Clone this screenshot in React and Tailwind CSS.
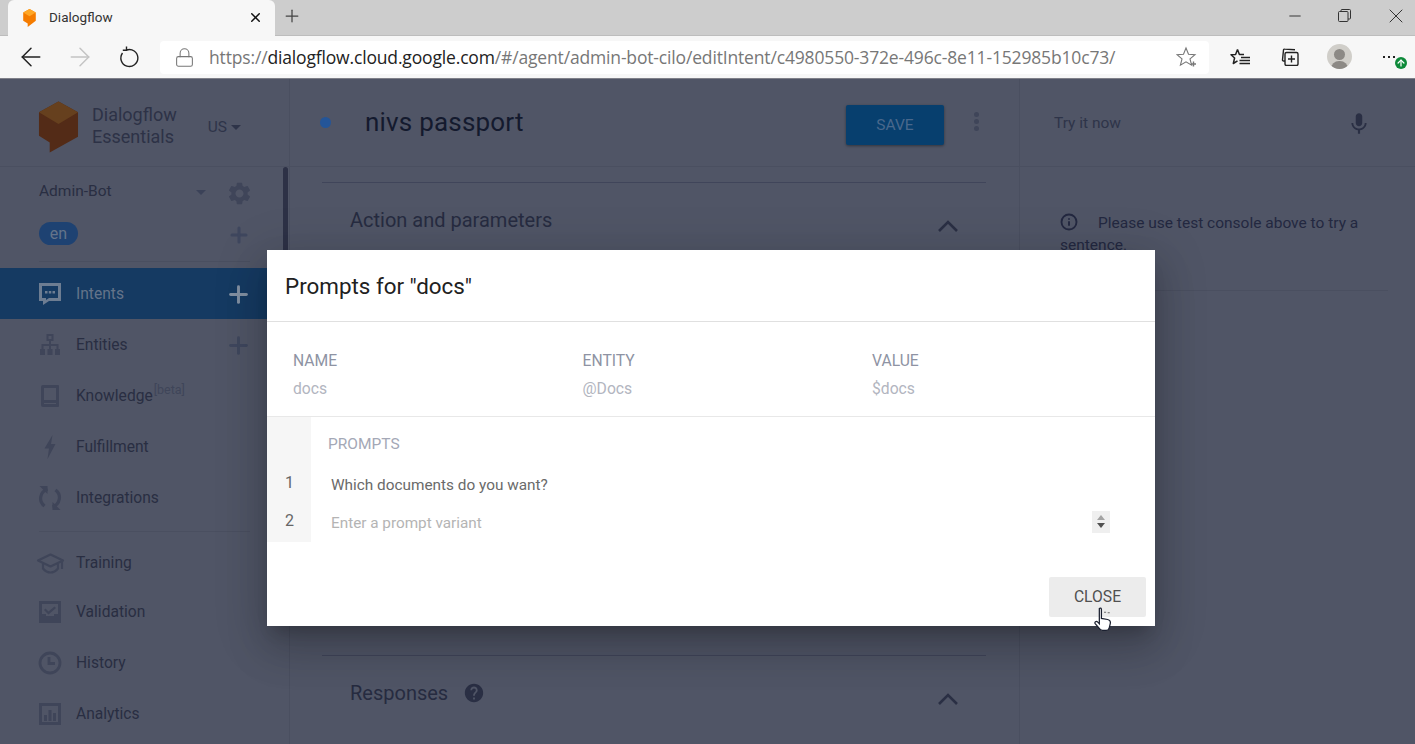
import React from "react";
import { ArrowLeft, ArrowRight, ArrowUp, Lock, X, Plus, Minus, Info } from "lucide-react";
import { MdSettings, MdMic, MdHelp } from "react-icons/md";

const FONT = { fontFamily: "Roboto, sans-serif" };

const NAV_TOP = [
  { label: "Intents", icon: "intents", plus: true, active: true },
  { label: "Entities", icon: "entities", plus: true },
  { label: "Knowledge", icon: "knowledge", beta: true },
  { label: "Fulfillment", icon: "bolt" },
  { label: "Integrations", icon: "sync" },
];

const NAV_BOTTOM = [
  { label: "Training", icon: "training", short: true },
  { label: "Validation", icon: "validation" },
  { label: "History", icon: "history" },
  { label: "Analytics", icon: "analytics" },
];

const NavIcon = ({ name, className }) => {
  if (name === "intents")
    return (
      <svg viewBox="0 0 24 24" className={className} fill="currentColor">
        <path fillRule="evenodd" d="M1 1h22v18H11l-6 4v-4H1V1zm3 3v12h4v2l3-2h9V4H4zm3 5h2.500v2.500H7V9zm3.800 0h2.500v2.500h-2.500V9zm3.700 0H17v2.500h-2.500V9z" />
      </svg>
    );
  if (name === "entities")
    return (
      <svg viewBox="0 0 24 24" className={className} fill="currentColor">
        <path fillRule="evenodd" d="M8.500 1h7v7H13v3h7.500v5H22v6h-5v-6h1.500v-3H13v3h1.500v6h-5v-6H11v-3H5.500v3H7v6H2v-6h1.500v-5H11V8H8.500V1zm2 2v3h3V3h-3z" />
      </svg>
    );
  if (name === "knowledge")
    return (
      <svg viewBox="0 0 24 24" className={className} fill="currentColor">
        <path fillRule="evenodd" d="M5 1h15a1 1 0 0 1 1 1v20a1 1 0 0 1-1 1H5a2 2 0 0 1-2-2V3a2 2 0 0 1 2-2zm1 3v12h12V4H6zm0 15v1h12v-1H6z" />
      </svg>
    );
  if (name === "bolt")
    return (
      <svg viewBox="0 0 24 24" className={className} fill="currentColor">
        <path d="M14.500 0 6.500 13.500h4.500L9.500 24 17.500 9H13L14.500 0z" />
      </svg>
    );
  if (name === "sync")
    return (
      <svg viewBox="0 0 24 24" className={className} fill="none" stroke="currentColor" strokeWidth="3.200">
        <path d="M9.500 3.200A9.500 9.500 0 0 0 6.500 20" />
        <path d="M14.500 20.800A9.500 9.500 0 0 0 17.500 4" />
        <path d="M1.500 0h8v8z" fill="currentColor" stroke="none" />
        <path d="M22.500 24h-8v-8z" fill="currentColor" stroke="none" />
      </svg>
    );
  if (name === "training")
    return (
      <svg viewBox="0 0 29 21" className={className} fill="none" stroke="currentColor" strokeWidth="2.200">
        <path d="M14.500 1.500 27 7.500l-12.500 6L2 7.500z" strokeLinejoin="round" />
        <path d="M7 10.500v5c2 2.500 4.500 4 7.500 4s5.500-1.500 7.500-4v-5" />
        <path d="M26 8v8" />
      </svg>
    );
  if (name === "validation")
    return (
      <svg viewBox="0 0 24 24" className={className} fill="currentColor">
        <path fillRule="evenodd" d="M1 1h22v22H1V1zm3 3v10h4v2h8v-2h4V4H4zm3.500 4.500 3 3 6-5 1.500 1.500-7.500 6.500-4.500-4.500 1.500-1.500z" />
      </svg>
    );
  if (name === "history")
    return (
      <svg viewBox="0 0 24 24" className={className} fill="none" stroke="currentColor" strokeWidth="2.800">
        <circle cx="12" cy="12" r="10" />
        <path d="M11 6v6.500h6" />
      </svg>
    );
  return (
    <svg viewBox="0 0 24 24" className={className} fill="currentColor">
      <path fillRule="evenodd" d="M1 1h22v22H1V1zm3 3v16h16V4H4zm2 9h3v6H6v-6zm4.500-5h3v11h-3V8zM15 11h3v8h-3v-8z" />
    </svg>
  );
};

const NavItem = ({ item }) => (
  <div className={`flex items-center pl-[38px] pr-[37px] ${item.short ? "h-[48px] pt-[2px]" : "h-[51px]"} ${item.active ? "bg-[#153a62] text-[#64748a]" : "text-[#292e42]"}`}>
    {item.icon === "training" ? (
      <NavIcon name="training" className="w-[29px] h-[21px] -ml-[2px] -mr-[3px] text-[#3f4559]" />
    ) : (
      <NavIcon name={item.icon} className={`w-[24px] h-[24px] ${item.active ? "text-[#6d7d92]" : "text-[#3f4559]"}`} />
    )}
    <span className="ml-[14px] mt-[2px] text-[15.600px] leading-none">{item.label}</span>
    {item.beta && <span className="ml-[1px] -mt-[10px] text-[12.500px] text-[#3f4559] leading-none">[beta]</span>}
    {item.plus && (
      <Plus className={`ml-auto mt-[2px] w-[27px] h-[27px] ${item.active ? "text-[#8290a2]" : "text-[#3f475e]"}`} strokeWidth={2.600} />
    )}
  </div>
);

const Sidebar = () => (
  <aside className="w-[290px] shrink-0 border-r border-[#4a4f60] relative">
    <div className="h-[88px] flex items-center pl-[38px] border-b border-[#4a4f60]">
      <svg viewBox="0 0 42 52" className="w-[41px] h-[52px] shrink-0 mt-[8px]">
        <path d="M21 0 41 11v25L12 52V42L1 35V11z" fill="#532b17" />
        <path d="M21 0 41 11 21 23 1 11z" fill="#66401e" />
      </svg>
      <div className="ml-[13px] mt-[6px] text-[18px] leading-[22px] text-[#2d3246]">
        <div>Dialogflow</div>
        <div>Essentials</div>
      </div>
      <span className="ml-[31px] mt-[10px] text-[15.500px] text-[#2e3449]">US</span>
      <span className="ml-[4px] mt-[10px] w-0 h-0 border-l-[5px] border-r-[5px] border-t-[5px] border-l-transparent border-r-transparent border-t-[#2e3449]" />
    </div>
    <div className="pl-[39px] pr-[38px] pt-[10px]">
      <div className="flex items-center h-[30px]">
        <span className="text-[15.500px] text-[#292e42]">Admin-Bot</span>
        <span className="ml-auto mr-[20px] w-0 h-0 border-l-[5px] border-r-[5px] border-t-[5px] border-l-transparent border-r-transparent border-t-[#3b4258]" />
        <MdSettings className="w-[27px] h-[27px] -mr-[2px] mt-[3px] text-[#3f4559]" />
      </div>
      <div className="flex items-center justify-between h-[23px] mt-[15px]">
        <span className="w-[39px] h-[23px] rounded-full bg-[#1e4272] text-[#64748a] text-[16px] flex items-center justify-center">en</span>
        <Plus className="w-[24px] h-[24px] mt-[3px] text-[#3f475e]" strokeWidth={3} />
      </div>
    </div>
    <div className="mx-[39px] mt-[16px] mb-[6px] border-t border-[#4a4f60]" />
    <nav>
      {NAV_TOP.map((item) => <NavItem key={item.label} item={item} />)}
    </nav>
    <div className="mx-[39px] mt-[8px] mb-[6px] border-t border-[#4a4f60]" />
    <nav>
      {NAV_BOTTOM.map((item) => <NavItem key={item.label} item={item} />)}
    </nav>
    <div className="absolute top-[88px] right-[1px] w-[5px] h-[90px] rounded-full bg-[#2d3146]" />
  </aside>
);

const Dialog = () => (
  <div className="absolute left-[267px] top-[171px] w-[888px] h-[376px] bg-white shadow-[0_11px_15px_-7px_rgba(0,0,0,0.2),0_24px_38px_3px_rgba(0,0,0,0.14),0_9px_46px_8px_rgba(0,0,0,0.12)] flex flex-col">
    <div className="h-[72px] pl-[18px] pt-[2px] flex items-center border-b border-[#e0e0e0] text-[22.400px] text-[#212121]">Prompts for "docs"</div>
    <div className="h-[95px] flex pl-[26px] pt-[28px] border-b border-[#e8e8e8]">
      {[["NAME", "docs"], ["ENTITY", "@Docs"], ["VALUE", "$docs"]].map(([label, value]) => (
        <div key={label} className="w-[289.500px] shrink-0">
          <div className="text-[15.700px] leading-[22px] text-[#8e93a3]">{label}</div>
          <div className="text-[15.700px] leading-[22px] mt-[6px] text-[#b2b5c0]">{value}</div>
        </div>
      ))}
    </div>
    <div className="flex h-[125px]">
      <div className="w-[44px] bg-[#f6f6f6] text-[16px] text-[#666] pl-[18px] pt-[55px]">
        <div className="leading-[22px]">1</div>
        <div className="leading-[22px] mt-[16px]">2</div>
      </div>
      <div className="flex-1 pl-[17px] pr-[45px] pt-[16px]">
        <div className="text-[15.500px] leading-[22px] text-[#a4a8b6]">PROMPTS</div>
        <div className="pl-[3px] mt-[19px] text-[15.350px] leading-[22px] text-[#6a6a6a]">Which documents do you want?</div>
        <div className="pl-[3px] mt-[16px] flex items-center justify-between text-[15.300px] leading-[22px] text-[#b4b4b4]">
          <span>Enter a prompt variant</span>
          <span className="w-[18px] h-[22px] -mt-[3px] bg-[#efefef] flex flex-col items-center justify-center gap-[3px]">
            <span className="w-0 h-0 border-l-[4px] border-r-[4px] border-b-[5px] border-l-transparent border-r-transparent border-b-[#a3a3a3]" />
            <span className="w-0 h-0 border-l-[4px] border-r-[4px] border-t-[5px] border-l-transparent border-r-transparent border-t-[#505050]" />
          </span>
        </div>
      </div>
    </div>
    <div className="flex justify-end pr-[9px] pt-[35px]">
      <button className="relative w-[97px] h-[40px] rounded-[2px] bg-[#ececec] text-[15.700px] text-[#505050]">
        CLOSE
        <svg viewBox="0 0 20 24" className="absolute left-[44px] top-[30px] w-[21px] h-[25px]">
          <path d="M6 1.500c1-1 2-.5 2 1V11l6 1c2 .5 3 2 2.500 4l-1 4c-.5 1.500-1 2.500-3 2.500H9c-1.500 0-2.500-1-3.500-2.500L2 16c-1-1.500 1-3 2.500-1.500L6 16V1.500z" fill="#fff" stroke="#1b2030" strokeWidth="1.200" />
          <path d="M10.500 5h2M14 5.500h2" stroke="#6b6b6b" strokeWidth="1" />
        </svg>
      </button>
    </div>
  </div>
);

const SectionHeader = ({ children }) => (
  <div className="h-[74px] flex items-center justify-between pl-[28px] pr-[28px]">
    <span className="flex items-center gap-[15px] text-[20px] text-[#262b40]">{children}</span>
    <svg viewBox="0 0 20 12" className="w-[20px] h-[12px] mt-[12px] text-[#2a2f44]" fill="none" stroke="currentColor" strokeWidth="2.600">
      <path d="M1 11 10 2l9 9" />
    </svg>
  </div>
);

const Main = () => (
  <main className="w-[730px] shrink-0 border-r border-[#4a4f60]">
    <div className="h-[88px] flex items-center pl-[30px] pr-[40px] border-b border-[#4a4f60]">
      <span className="w-[11px] h-[11px] rounded-full bg-[#245598]" />
      <h1 className="ml-[34px] text-[26px] tracking-[0.2px] text-[#141a2e] font-normal">nivs passport</h1>
      <button className="ml-auto mr-[-1px] mt-[5px] pt-[1px] w-[98px] h-[40px] rounded-[2px] bg-[#073f6e] text-[#49688c] text-[15.500px] shadow-[0_1px_3px_rgba(0,0,0,0.4)]">SAVE</button>
      <div className="ml-[31px] -mt-[3px] flex flex-col gap-[2px]">
        <span className="w-[5px] h-[5px] rounded-full bg-[#3f4559]" />
        <span className="w-[5px] h-[5px] rounded-full bg-[#3f4559]" />
        <span className="w-[5px] h-[5px] rounded-full bg-[#3f4559]" />
      </div>
    </div>
    <div className="pl-[32px] pr-[33px]">
      <div className="mt-[15px] border-t border-[#40455a]" />
      <SectionHeader>Action and parameters</SectionHeader>
      <div className="mt-[398px] border-t border-[#40455a]" />
      <SectionHeader>
        Responses
        <MdHelp className="w-[22px] h-[22px] text-[#2a2f44]" />
      </SectionHeader>
    </div>
  </main>
);

const TestPanel = () => (
  <section className="flex-1">
    <div className="h-[88px] flex items-center pl-[34px] pr-[43px] border-b border-[#4a4f60]">
      <span className="mt-[2px] text-[15.500px] text-[#2e3449]">Try it now</span>
      <MdMic className="ml-auto mt-[2px] w-[26px] h-[26px] text-[#2a2f44]" />
    </div>
    <div className="ml-[40px] mr-[27px] pt-[45px] pb-[34px] border-b border-[#4a4f60] text-[15.500px] leading-[22px] text-[#232840]">
      <Info className="inline-block w-[18px] h-[18px] mr-[20px] align-[-3px]" strokeWidth={2.500} />
      Please use test console above to try a sentence.
    </div>
  </section>
);

const BrowserChrome = () => (
  <header className="h-[79px] shrink-0 flex flex-col">
    <div className="h-[35px] bg-[#cdcdcd] flex items-end pl-[8px]">
      <div className="relative w-[267px] h-[36px] -mb-[1px] pb-[1px] bg-[#f7f7f7] rounded-t-[6px] flex items-center pl-[14px] pr-[12px]">
        <svg viewBox="0 0 16 20" className="w-[15px] h-[18px]">
          <path d="M8 0l7 4v9l-9 7v-4l-5-3V4z" fill="#f57c00" />
          <path d="M8 0l7 4-7 4-7-4z" fill="#ffa726" />
        </svg>
        <span className="ml-[12px] text-[13.500px] text-[#333]">Dialogflow</span>
        <X className="ml-auto w-[15px] h-[15px] text-[#111]" strokeWidth={2.400} />
      </div>
      <Plus className="ml-[7px] mb-[9px] w-[20px] h-[20px] text-[#444]" strokeWidth={1.500} />
      <div className="ml-auto flex items-center h-full pb-[4px] text-[#333] pr-[7px]">
        <Minus className="w-[18px] h-[18px] mr-[34px]" strokeWidth={1.300} />
        <svg viewBox="0 0 13 13" className="w-[13px] h-[13px] mr-[33px]" fill="none" stroke="#333">
          <rect x="0.500" y="2.500" width="9.500" height="10" rx="1" />
          <path d="M3 2.500V1.500a1 1 0 0 1 1-1h7.500a1 1 0 0 1 1 1V9a1 1 0 0 1-1 1H10" />
        </svg>
        <X className="w-[24px] h-[24px]" strokeWidth={1} />
      </div>
    </div>
    <div className="h-[44px] bg-[#f7f7f7] border-t border-t-[#bdbdbd] border-b border-b-[#7f8089] flex items-center pl-[16px]">
      <ArrowLeft className="w-[30px] h-[30px] text-[#222]" strokeWidth={1.200} />
      <ArrowRight className="ml-[19px] w-[30px] h-[30px] text-[#c4c4c4]" strokeWidth={1.200} />
      <svg viewBox="0 0 24 24" className="ml-[22px] w-[24px] h-[24px] text-[#222]" fill="none" stroke="currentColor" strokeWidth="1.400">
        <path d="M9.500 5A8.500 8.500 0 1 1 5.500 8" />
        <path d="M9.500 1.500V5.300H5.800" />
      </svg>
      <div className="ml-[19px] w-[1049px] h-[33px] rounded-[4px] bg-white flex items-center pl-[14px] pr-[11px]">
        <Lock className="w-[21px] h-[21px] text-[#777]" strokeWidth={1.200} />
        <div className="ml-[14px] text-[17.500px] tracking-[-0.16px] whitespace-nowrap" style={{ fontFamily: "'Open Sans', sans-serif" }}>
          <span className="text-[#777]">https://</span>
          <span className="text-[#222]">dialogflow.cloud.google.com</span>
          <span className="text-[#777]">/#/agent/admin-bot-cilo/editIntent/c4980550-372e-496c-8e11-152985b10c73/</span>
        </div>
        <svg viewBox="0 0 22 22" className="ml-auto w-[22px] h-[22px] text-[#777]" fill="none" stroke="currentColor" strokeWidth="1.100">
          <path d="M10 2l2.500 6.200 6.500.5-5 4.200 1.600 6.300L10 15.800 4.400 19.200 6 12.900 1 8.700l6.500-.5z" />
          <path d="M17.500 15.500v5M15 18h5" strokeWidth="1.400" />
        </svg>
      </div>
      <svg viewBox="0 0 20 18" className="ml-[21px] w-[20px] h-[18px] text-[#222]" fill="none" stroke="currentColor" strokeWidth="1.500">
        <path d="M7.500 1.500 9.400 6.500H14M7.500 1.500 5.600 6.500 1 6.800l3.600 3.200L3.300 15.500l4.200-2.700" strokeLinejoin="round" />
        <path d="M11 9.500h9M9.500 12.500H20M9.500 15.500H20" />
      </svg>
      <svg viewBox="0 0 18 18" className="ml-[31px] w-[18px] h-[18px] text-[#222]" fill="none" stroke="currentColor" strokeWidth="1.400">
        <rect x="4" y="4.500" width="13" height="13" rx="1.500" />
        <path d="M4 13H2.500a1 1 0 0 1-1-1.200L2.500 2a1 1 0 0 1 1.200-.9L14 1.700" />
        <path d="M10.500 7.500v7M7 11h7" />
      </svg>
      <div className="ml-[28px] -mt-[1px] w-[25px] h-[25px] rounded-full bg-[#d0cec9] flex flex-col items-center justify-end overflow-hidden">
        <span className="w-[11px] h-[11px] rounded-full bg-[#8c8985] mb-[1px]" />
        <span className="w-[17px] h-[8px] rounded-t-full bg-[#8c8985]" />
      </div>
      <div className="relative ml-[31px] w-[24px] h-[20px] flex items-center gap-[3px]">
        <span className="w-[2px] h-[2px] bg-[#222]" />
        <span className="w-[2px] h-[2px] bg-[#222]" />
        <span className="w-[2px] h-[2px] bg-[#222]" />
        <span className="absolute left-[12px] top-[10px] w-[12px] h-[12px] rounded-full bg-[#0e8a3a] flex items-center justify-center">
          <ArrowUp className="w-[10px] h-[10px] text-white" strokeWidth={3} />
        </span>
      </div>
    </div>
  </header>
);

export default function App() {
  return (
    <div className="w-[1415px] h-[744px] overflow-hidden flex flex-col bg-[#505566]" style={FONT}>
      <BrowserChrome />
      <div className="relative flex-1 flex overflow-hidden">
        <Sidebar />
        <Main />
        <TestPanel />
        <Dialog />
      </div>
    </div>
  );
}
